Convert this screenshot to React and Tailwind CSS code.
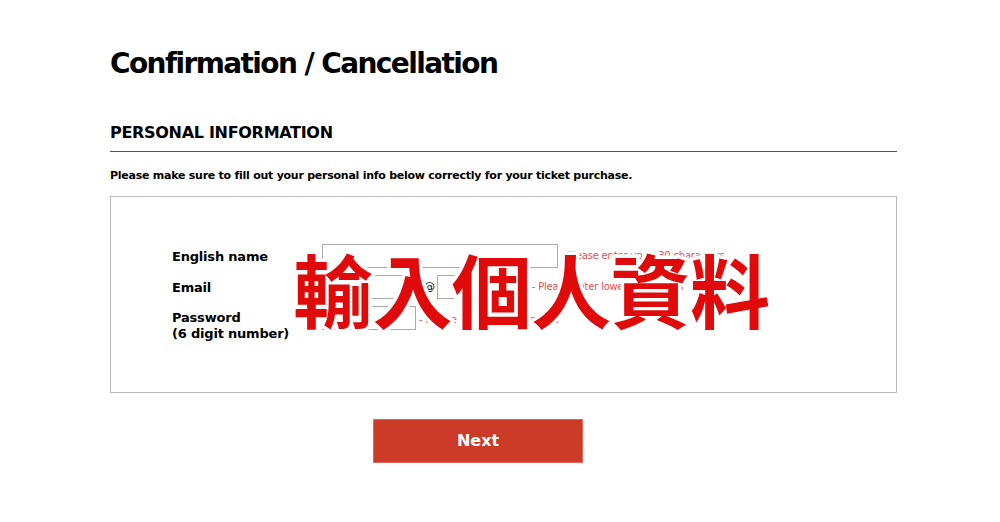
export default function App() {
  const font = { fontFamily: '"DejaVu Sans", Verdana, sans-serif' };

  return (
    <div className="min-h-[522px] w-[1000px] bg-white text-black" style={font}>
      <div className="ml-[110px] w-[787px] pt-[47px]">
        <h1 className="text-[28px] font-bold leading-[34px] tracking-[-1.6px]">Confirmation / Cancellation</h1>

        <h2 className="mt-[42px] text-[16px] font-bold leading-[20px] tracking-[-0.3px]">PERSONAL INFORMATION</h2>
        <div className="mt-[8px] h-px bg-[#555]"></div>

        <p className="mt-[17px] text-[11px] font-bold leading-[14px] tracking-[-0.25px]">
          Please make sure to fill out your personal info below correctly for your ticket purchase.
        </p>

        <div className="relative mt-[13px] h-[197px] border border-[#bbb]">
          <div className="grid grid-cols-[150px_1fr] gap-y-[7px] pl-[61px] pt-[47px] text-[13px] font-bold leading-[16px] tracking-[-0.2px]">
            <div className="pt-[5px]">English name</div>
            <div className="flex items-center">
              <input className="h-[24px] w-[236px] border border-[#aaa] outline-none" />
              <span className="ml-[3px] text-[10px] font-normal text-[#e05050]">- Please enter up to 30 characters</span>
            </div>

            <div className="pt-[5px]">Email</div>
            <div className="flex items-center">
              <input className="h-[24px] w-[100px] border border-[#aaa] outline-none" />
              <span className="mx-[2px] text-[11px] font-normal">@</span>
              <input className="h-[24px] w-[92px] border border-[#aaa] outline-none" />
              <span className="ml-[3px] text-[10px] font-normal text-[#e05050]">- Please enter lowercase letters</span>
            </div>

            <div className="pt-[4px]">
              Password
              <br />
              (6 digit number)
            </div>
            <div className="flex items-start">
              <input className="h-[24px] w-[94px] border border-[#aaa] outline-none" />
              <span className="ml-[3px] mt-[6px] text-[10px] font-normal text-[#e05050]">- Please enter your password</span>
            </div>
          </div>

          {/* overlay caption */}
          <div
            className="absolute left-[182px] top-[40px] text-[80px] font-bold leading-[100px] tracking-[-0.6px] text-[#e00a0a] [-webkit-text-stroke:7px_white] [paint-order:stroke_fill]"
            style={{ fontFamily: '"Noto Sans CJK TC", "Noto Sans CJK SC", sans-serif' }}
          >
            輸入個人資料
          </div>
        </div>

        <div className="mt-[26px] pl-[263px]">
          <button className="h-[44px] w-[210px] border border-[#e06a5a] bg-[#cc3b27] text-[16px] font-bold text-white">
            Next
          </button>
        </div>
      </div>
    </div>
  );
}
